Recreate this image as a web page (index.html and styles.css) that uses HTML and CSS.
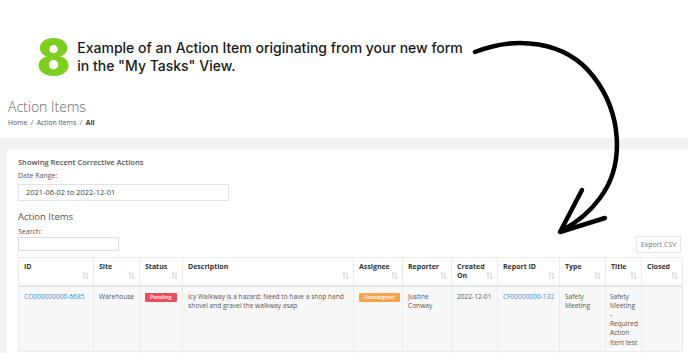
FILE: index.html
```html
<!DOCTYPE html>
<html lang="en">
<head>
  <meta charset="UTF-8" />
  <meta name="viewport" content="width=device-width, initial-scale=1.0"/>
  <title>Action Items</title>
  <link rel="stylesheet" href="styles.css">
</head>
<body>
  <div class="promo">
    <div class="step">8</div>
    <p class="step-text">Example of an Action Item originating from your new form<br>in the "My Tasks" View.</p>
  </div>

  <div class="page-head">
    <h1>Action Items</h1>
    <div class="crumbs">Home &nbsp;/&nbsp; Action Items &nbsp;/&nbsp; <b>All</b></div>
  </div>

  <div class="content">
    <div class="card">
      <div class="card-title">Showing Recent Corrective Actions</div>
      <label class="field-label">Date Range:</label>
      <div class="date-input">2021-06-02 to 2022-12-01</div>

      <h2>Action Items</h2>
      <div class="toolbar">
        <div class="search">
          <label class="field-label">Search:</label>
          <div class="search-input"></div>
        </div>
        <button class="export">Export CSV</button>
      </div>

      <table class="items">
        <colgroup>
          <col class="c-id"><col class="c-site"><col class="c-status"><col class="c-desc">
          <col class="c-assignee"><col class="c-reporter"><col class="c-created"><col class="c-report">
          <col class="c-type"><col class="c-title"><col class="c-closed">
        </colgroup>
        <thead>
          <tr>
            <th>ID<svg class="sort" viewBox="0 0 7 7"><path d="M2 6.5V0.5M0.8 1.8L2 0.5L3.2 1.8M5 0.5V6.5M3.8 5.2L5 6.5L6.2 5.2"/></svg></th>
            <th>Site<svg class="sort" viewBox="0 0 7 7"><path d="M2 6.5V0.5M0.8 1.8L2 0.5L3.2 1.8M5 0.5V6.5M3.8 5.2L5 6.5L6.2 5.2"/></svg></th>
            <th>Status<svg class="sort" viewBox="0 0 7 7"><path d="M2 6.5V0.5M0.8 1.8L2 0.5L3.2 1.8M5 0.5V6.5M3.8 5.2L5 6.5L6.2 5.2"/></svg></th>
            <th>Description<svg class="sort" viewBox="0 0 7 7"><path d="M2 6.5V0.5M0.8 1.8L2 0.5L3.2 1.8M5 0.5V6.5M3.8 5.2L5 6.5L6.2 5.2"/></svg></th>
            <th>Assignee<svg class="sort" viewBox="0 0 7 7"><path d="M2 6.5V0.5M0.8 1.8L2 0.5L3.2 1.8M5 0.5V6.5M3.8 5.2L5 6.5L6.2 5.2"/></svg></th>
            <th>Reporter<svg class="sort" viewBox="0 0 7 7"><path d="M2 6.5V0.5M0.8 1.8L2 0.5L3.2 1.8M5 0.5V6.5M3.8 5.2L5 6.5L6.2 5.2"/></svg></th>
            <th>Created On<svg class="sort" viewBox="0 0 7 7"><path d="M2 6.5V0.5M0.8 1.8L2 0.5L3.2 1.8M5 0.5V6.5M3.8 5.2L5 6.5L6.2 5.2"/></svg></th>
            <th>Report ID<svg class="sort" viewBox="0 0 7 7"><path d="M2 6.5V0.5M0.8 1.8L2 0.5L3.2 1.8M5 0.5V6.5M3.8 5.2L5 6.5L6.2 5.2"/></svg></th>
            <th>Type<svg class="sort" viewBox="0 0 7 7"><path d="M2 6.5V0.5M0.8 1.8L2 0.5L3.2 1.8M5 0.5V6.5M3.8 5.2L5 6.5L6.2 5.2"/></svg></th>
            <th>Title<svg class="sort" viewBox="0 0 7 7"><path d="M2 6.5V0.5M0.8 1.8L2 0.5L3.2 1.8M5 0.5V6.5M3.8 5.2L5 6.5L6.2 5.2"/></svg></th>
            <th>Closed<svg class="sort" viewBox="0 0 7 7"><path d="M2 6.5V0.5M0.8 1.8L2 0.5L3.2 1.8M5 0.5V6.5M3.8 5.2L5 6.5L6.2 5.2"/></svg></th>
          </tr>
        </thead>
        <tbody>
          <tr class="odd">
            <td><a href="#">CO000000000-6685</a></td>
            <td>Warehouse</td>
            <td><span class="badge pending">Pending</span></td>
            <td>Icy Walkway is a hazard: Need to have a shop hand shovel and gravel the walkway asap</td>
            <td><span class="badge unassigned">Unassigned</span></td>
            <td>Justine Conway</td>
            <td>2022-12-01</td>
            <td><a href="#">CF00000000-132</a></td>
            <td>Safety Meeting</td>
            <td class="tight">Safety Meeting - Required Action Item&nbsp;test</td>
            <td></td>
          </tr>
          <tr>
            <td>&nbsp;</td><td></td><td></td><td></td><td></td><td></td>
            <td></td><td></td><td></td><td></td><td></td>
          </tr>
        </tbody>
      </table>
    </div>
  </div>

  <svg class="arrow" width="688" height="364" viewBox="0 0 688 364">
    <path d="M475,52 C515,36 565,40 593,76 C622,113 625,165 600,198 C590,212 576,223 561,231" />
    <path d="M582,190 L560,232 L605,218" />
  </svg>
</body>
</html>
```

FILE: styles.css
```css
body {
  margin: 0;
  font-family: "Open Sans", Arial, sans-serif;
  background: white;
  color: #555;
  width: 688px;
  height: 364px;
  overflow: hidden;
  position: relative;
}

.promo {
  display: flex;
  align-items: center;
  gap: 7px;
  height: 94px;
  padding: 20px 0 0 37px;
  box-sizing: border-box;
}

.step {
  font-family: Inter, sans-serif;
  font-weight: 900;
  font-size: 49px;
  line-height: 1;
  color: #7ccf1e;
}

.step-text {
  margin: 0;
  font-family: Inter, sans-serif;
  font-weight: 500;
  font-size: 14px;
  line-height: 18px;
  color: #1a1a1a;
}

.page-head {
  padding: 4px 8px 0;
  height: 44px;
  box-sizing: border-box;
}

.page-head h1 {
  margin: 0;
  font-weight: 300;
  font-size: 14px;
  line-height: 18px;
  color: #666;
}

.crumbs {
  margin-top: 2px;
  font-size: 6.8px;
  color: #555;
}

.crumbs b {
  color: #333;
}

.content {
  background: #f2f2f2;
  height: 215px;
  padding: 11px 0 0 7px;
  box-sizing: border-box;
  overflow: hidden;
}

.card {
  background: white;
  padding: 8px 6px 10px 11px;
}

.card-title {
  font-size: 7.5px;
  font-weight: 600;
  line-height: 10px;
  color: #555;
}

.field-label {
  display: block;
  font-size: 7px;
  line-height: 10px;
  margin-top: 4px;
  color: #555;
}

.date-input {
  width: 211px;
  height: 17px;
  margin-top: 3px;
  border: 1px solid #e3e3e3;
  box-sizing: border-box;
  padding-left: 7px;
  font-size: 7.5px;
  line-height: 15px;
  color: #444;
}

.card h2 {
  margin: 10px 0 0;
  font-size: 9.5px;
  font-weight: 400;
  line-height: 12px;
  color: #555;
}

.toolbar {
  display: flex;
  justify-content: space-between;
  align-items: flex-end;
  margin-bottom: 6px;
}

.search .field-label {
  margin-top: 4px;
}

.search-input {
  width: 101px;
  height: 14px;
  border: 1px solid #ddd;
  box-sizing: border-box;
}

.export {
  font-family: "Open Sans", Arial, sans-serif;
  font-size: 7px;
  color: #777;
  background: white;
  border: 1px solid #e6e6e6;
  height: 17px;
  width: 45px;
  padding: 0;
  margin-right: 1px;
  margin-bottom: -2px;
}

.items {
  width: 664px;
  table-layout: fixed;
  border-collapse: collapse;
  font-size: 6.6px;
  line-height: 9.2px;
}

.c-id { width: 75px; }
.c-site { width: 46px; }
.c-status { width: 43px; }
.c-desc { width: 171px; }
.c-assignee { width: 49px; }
.c-reporter { width: 49px; }
.c-created { width: 46px; }
.c-report { width: 62px; }
.c-type { width: 46px; }
.c-title { width: 36px; }
.c-closed { width: 41px; }

.items th {
  position: relative;
  text-align: left;
  vertical-align: top;
  font-size: 7px;
  font-weight: 700;
  color: #333;
  height: 28px;
  box-sizing: border-box;
  padding: 4px 5px;
  border: 1px solid #ececec;
  border-bottom: 2px solid #e6e6e6;
}

.sort {
  position: absolute;
  right: 4px;
  bottom: 6px;
  width: 7px;
  height: 7px;
  fill: none;
  stroke: #c4c4c4;
  stroke-width: 0.8;
}

.items td {
  vertical-align: top;
  padding: 5px 3px 4px 5px;
  border: 1px solid #ececec;
  color: #555;
}

.items td.tight {
  padding-left: 4px;
}

.items tr.odd td {
  background: #f8f8f8;
}

.items a {
  color: #3b8fd8;
  text-decoration: none;
}

.badge {
  display: inline-block;
  color: white;
  font-size: 5.5px;
  font-weight: 600;
  line-height: 9px;
  padding: 0 5px;
  border-radius: 1px;
}

.pending {
  background: #ef4d5d;
}

.unassigned {
  background: #f6a44b;
}

.arrow {
  position: absolute;
  left: 0;
  top: 0;
  pointer-events: none;
}

.arrow path {
  fill: none;
  stroke: #000;
  stroke-width: 4.5;
  stroke-linecap: round;
  stroke-linejoin: round;
}
```
